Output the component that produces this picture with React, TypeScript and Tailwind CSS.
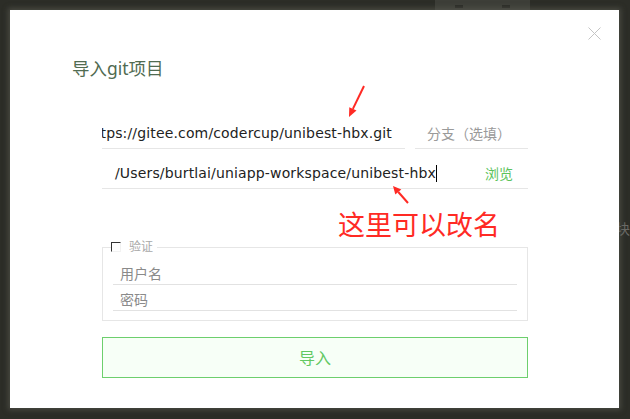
import React from 'react';

const latin = { fontFamily: '"DejaVu Sans", "Noto Sans CJK SC", sans-serif' };
const cjk = { fontFamily: '"Noto Sans", "Noto Sans CJK SC", sans-serif' };

const CloseIcon: React.FC = () => (
  <svg width="13" height="13" viewBox="0 0 13 13" fill="none">
    <path d="M0.5 0.5L12.5 12.5M12.5 0.5L0.5 12.5" stroke="#c4c4c4" strokeWidth="1" />
  </svg>
);

const ImportGitDialog: React.FC = () => {
  return (
    <div className="relative w-[609px] h-[398px] bg-white shadow-[0_0_5px_2px_rgba(95,96,88,0.55)]" style={cjk}>
      {/* close */}
      <button className="absolute left-[578px] top-[17px] w-[13px] h-[13px]">
        <CloseIcon />
      </button>

      <h1 className="pl-[62px] pt-[46px] text-[17.5px] leading-[24px] text-[#506b51]">导入git项目</h1>

      <div className="ml-[92px] w-[426px] mt-[38px]">
        {/* repo url + branch */}
        <div className="flex gap-[10px]">
          <div
            className="w-[303px] h-[31px] border-b border-[#e6e6e6] overflow-hidden flex items-center justify-end pr-[13px] whitespace-nowrap text-[14px] tracking-[0.15px] text-[#222]"
            style={latin}
          >
            https://gitee.com/codercup/unibest-hbx.git
          </div>
          <div className="w-[113px] h-[31px] border-b border-[#e6e6e6] flex items-center pl-[12px] text-[14px] text-[#9a9a9a]">
            分支（选填）
          </div>
        </div>

        {/* local path */}
        <div className="mt-[9px] h-[31px] border-b border-[#e6e6e6] flex items-center justify-between">
          <div className="flex items-center pl-[13px] text-[14px] tracking-[0.15px] text-[#222] whitespace-nowrap" style={latin}>
            /Users/burtlai/uniapp-workspace/unibest-hbx
            <span className="inline-block w-[1px] h-[17px] bg-black" />
          </div>
          <span className="pr-[15px] text-[14px] text-[#5cc35c]">浏览</span>
        </div>

        <p className="mt-[23px] pl-[236px] text-[27px] leading-[26px] text-[#ff2a24]">这里可以改名</p>

        {/* auth */}
        <fieldset className="mt-[1px] border border-[#e6e6e6] px-[10px] pt-[4px] pb-[9px]">
          <legend className="ml-[-2px] pr-[4px] flex items-center gap-[8px]">
            <span className="inline-block w-[10px] h-[10px] border-t border-l border-r border-b border-t-[#333] border-l-[#333] border-r-[#f2f2f2] border-b-[#f2f2f2]" />
            <span className="text-[12px] leading-[16px] text-[#a8a8a8]">验证</span>
          </legend>
          <div className="h-[26px] border-b border-[#e2e2e2] flex items-end pl-[7px] pb-[1px] text-[14px] leading-[18px] text-[#8a8a8a]">
            用户名
          </div>
          <div className="h-[26px] border-b border-[#e2e2e2] flex items-end pl-[7px] pb-[1px] text-[14px] leading-[18px] text-[#8a8a8a]">
            密码
          </div>
        </fieldset>

        <button className="mt-[16px] w-full h-[41px] border border-[#6dcf6d] bg-[#f7fff7] flex items-center justify-center text-[16px] text-[#62c862]">
          导入
        </button>
      </div>
    </div>
  );
};

export default function App() {
  return (
    <div className="relative w-[630px] h-[419px] overflow-hidden bg-[#2c2d27] pt-[10px] pl-[10px]">
      {/* window behind the dialog */}
      <div className="absolute left-[435px] top-0 w-[95px] h-[10px] bg-[#3d3e38]">
        <span className="absolute left-[20px] top-[5px] w-[8px] h-[3px] bg-[#2a2b26]" />
        <span className="absolute left-[67px] top-[5px] w-[8px] h-[3px] bg-[#2a2b26]" />
      </div>
      <span className="absolute left-[616px] top-[218px] text-[14px] text-[#6a6a66]" style={cjk}>块</span>

      <ImportGitDialog />

      {/* red annotation arrows */}
      <svg className="absolute left-0 top-0 pointer-events-none" width="630" height="419">
        <line x1="364" y1="86" x2="352.9" y2="108.9" stroke="#ff2a24" strokeWidth="2" />
        <polygon points="349,117 356.5,110.6 349.3,107.2" fill="#ff2a24" />
        <line x1="408" y1="203" x2="398.3" y2="192" stroke="#ff2a24" strokeWidth="2" />
        <polygon points="393,186 401.3,189.4 395.3,194.6" fill="#ff2a24" />
      </svg>
    </div>
  );
}
